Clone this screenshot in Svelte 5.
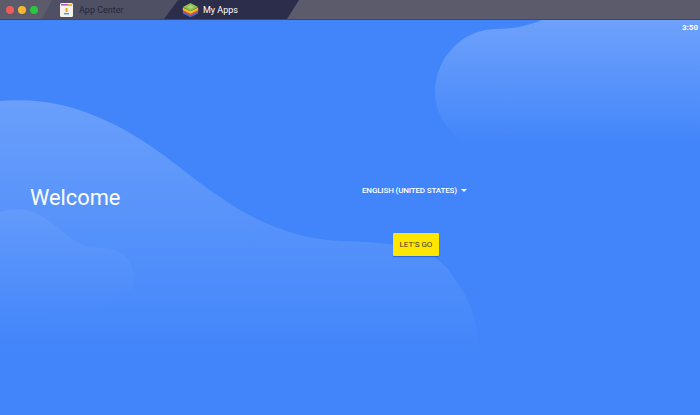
<script>
  let tabs = [
    { name: "App Center", active: false },
    { name: "My Apps", active: true }
  ];
  let lights = ["#ee5c57", "#f5b82e", "#2bc63f"];
</script>

<div class="window">
  <header class="titlebar">
    <div class="lights">
      {#each lights as color}
        <span class="light" style="background: {color}"></span>
      {/each}
    </div>
    <div class="tabs">
      {#each tabs as tab}
        <div class="tab" class:active={tab.active}>
          {#if tab.active}
            <svg width="17" height="16" viewBox="0 0 20 18">
              <path d="M1 10 L10 14 L19 10 L19 13 L10 17.5 L1 13Z" fill="#2f6fe0" />
              <path d="M1 8 L10 12 L19 8 L19 11 L10 15.5 L1 11Z" fill="#e8483c" />
              <path d="M1 6 L10 10.5 L19 6 L19 9 L10 13.5 L1 9Z" fill="#f4c020" />
              <path d="M1 5.5 L9.5 1 Q10 0.8 10.5 1 L19 5.5 L10 10.5 Z" fill="#8cc152" />
              <path d="M6 5.5 L10 3.2 L14 5.5 L10 7.8 Z" fill="#a9d66e" />
            </svg>
          {:else}
            <svg width="13" height="14" viewBox="0 0 13 14">
              <rect width="13" height="14" rx="1.5" fill="#f4f2ea" />
              <rect x="1" y="1" width="11" height="1.6" fill="#b05cc8" />
              <rect x="8" y="1" width="4" height="1.6" fill="#e8b93a" />
              <rect x="5.5" y="5" width="2" height="4" fill="#f0a020" />
              <rect x="4" y="10" width="5" height="1.4" fill="#4a9be0" />
            </svg>
          {/if}
          <span>{tab.name}</span>
        </div>
      {/each}
    </div>
  </header>

  <main class="screen">
    <svg class="waves" width="700" height="395" viewBox="0 20 700 395" aria-hidden="true">
      <defs>
        <linearGradient id="big" gradientUnits="userSpaceOnUse" x1="0" y1="100" x2="0" y2="355">
          <stop offset="0" stop-color="#6a9ffb" />
          <stop offset="1" stop-color="#4285fa" />
        </linearGradient>
        <linearGradient id="small" gradientUnits="userSpaceOnUse" x1="0" y1="208" x2="0" y2="315">
          <stop offset="0" stop-color="#6a9ffb" stop-opacity="0.6" />
          <stop offset="1" stop-color="#5a94fb" stop-opacity="0" />
        </linearGradient>
        <linearGradient id="corner" gradientUnits="userSpaceOnUse" x1="0" y1="20" x2="0" y2="145">
          <stop offset="0" stop-color="#6ea1fb" />
          <stop offset="1" stop-color="#4285fa" />
        </linearGradient>
      </defs>
      <path
        d="M0 101 C40 98 70 105 100 118 C140 135 170 160 200 183 C240 212 280 238 340 241 C370 242 410 243 435 258 C450 268 455 280 460 287 C472 305 480 330 480 360 L0 415 Z"
        fill="url(#big)"
      />
      <path
        d="M0 212 C8 209 20 208 30 211 C45 215 60 230 72 239 C82 246 92 248 104 248 C120 248 134 260 134 277 C134 290 125 298 110 304 L0 320 Z"
        fill="url(#small)"
      />
      <path
        d="M700 20 L542 20 C525 27 510 29 495 29 C460 30 435 60 435 92 C435 115 450 135 470 147 L700 147 Z"
        fill="url(#corner)"
      />
    </svg>

    <div class="status">3:50</div>
    <div class="content">
      <h1>Welcome</h1>
      <div class="setup">
        <div class="language">
          <span>ENGLISH (UNITED STATES)</span>
          <i class="caret"></i>
        </div>
        <button>LET'S GO</button>
      </div>
    </div>
  </main>
</div>

<style>
  :global(body) {
    margin: 0;
    background: #4285fa;
  }

  .window {
    width: 700px;
    height: 415px;
    overflow: hidden;
    font-family: Roboto, "Liberation Sans", sans-serif;
    display: flex;
    flex-direction: column;
  }

  .titlebar {
    height: 19px;
    flex: none;
    display: flex;
    align-items: stretch;
    background: #5b5b6b;
    border-bottom: 1px solid #45465a;
  }

  .lights {
    display: flex;
    align-items: center;
    gap: 4px;
    padding-left: 6px;
    width: 36px;
  }

  .light {
    width: 8px;
    height: 8px;
    border-radius: 50%;
  }

  .tabs {
    display: flex;
  }

  .tab {
    height: 19px;
    display: flex;
    align-items: center;
    box-sizing: border-box;
    background: #4f5063;
    color: #26273a;
    font-size: 9px;
    width: 135px;
    padding-left: 18px;
    gap: 6px;
    clip-path: polygon(10px 0, 100% 0, calc(100% - 12px) 100%, 0 100%);
  }

  .tab.active {
    background: #2b2d4b;
    color: #fff;
    margin-left: -13px;
    padding-left: 18px;
    gap: 4px;
    clip-path: polygon(14px 0, 100% 0, calc(100% - 12px) 100%, 0 100%);
  }

  .screen {
    position: relative;
    flex: 1;
    background: #4285fa;
    color: #fff;
    display: flex;
    flex-direction: column;
  }

  .waves {
    position: absolute;
    inset: 0;
  }

  .status {
    position: relative;
    height: 14px;
    padding-right: 2px;
    text-align: right;
    font-size: 8px;
    font-weight: 700;
    line-height: 15px;
  }

  .content {
    position: relative;
    display: flex;
    padding-left: 30px;
  }

  h1 {
    margin: 148px 0 0;
    width: 332px;
    font-size: 21.8px;
    font-weight: 400;
    line-height: 32px;
  }

  .setup {
    display: flex;
    flex-direction: column;
    align-items: center;
    gap: 36px;
    padding-top: 150px;
  }

  .language {
    display: flex;
    align-items: center;
    gap: 4px;
    height: 13px;
    font-size: 8px;
    font-weight: 500;
    letter-spacing: -0.15px;
  }

  .caret {
    width: 0;
    height: 0;
    border-left: 3px solid transparent;
    border-right: 3px solid transparent;
    border-top: 3px solid #fff;
  }

  button {
    width: 46px;
    height: 23px;
    margin-left: 3px;
    padding: 0;
    border: 0;
    border-radius: 1px;
    background: #ffe600;
    color: #3c3c2c;
    font: 400 8px Roboto, "Liberation Sans", sans-serif;
    box-shadow: 0 1px 1px rgba(20, 90, 220, 0.8), 0 -1px 0 rgba(60, 130, 250, 0.8);
  }
</style>
